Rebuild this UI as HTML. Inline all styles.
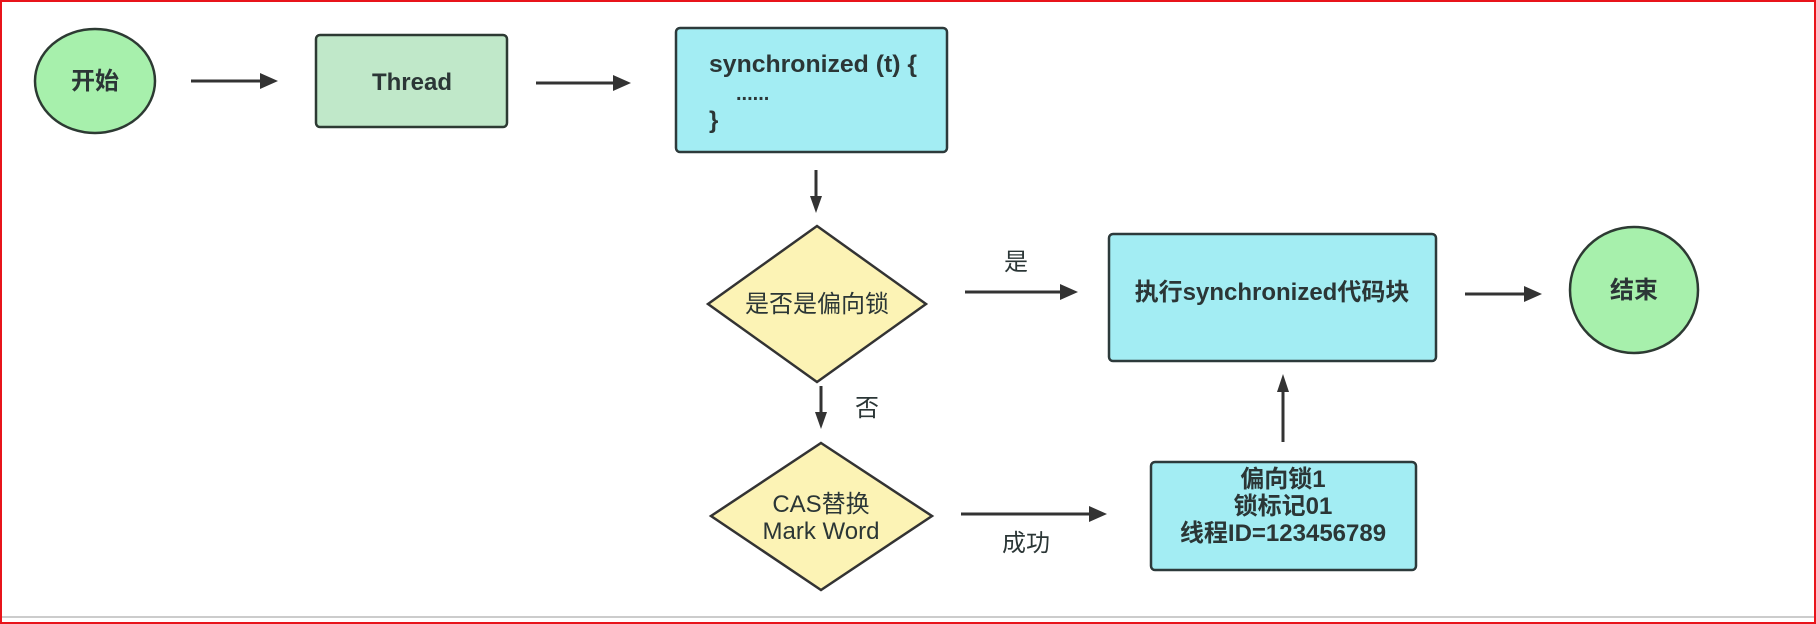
<!DOCTYPE html>
<html><head><meta charset="utf-8"><style>
html,body{margin:0;padding:0;background:#fff}
body{width:1816px;height:624px;overflow:hidden;position:relative}
svg{position:absolute;left:0;top:0}
text{font-family:"Liberation Sans","Noto Sans CJK SC",sans-serif;fill:#2b3636}
</style></head><body>
<svg width="1816" height="624" viewBox="0 0 1816 624">
<rect x="1" y="1" width="1814" height="622" fill="none" stroke="#e8141b" stroke-width="2"/>
<line x1="2" y1="617" x2="1814" y2="617" stroke="#9a9a9a" stroke-width="1"/>
<g stroke="#333" stroke-width="3" fill="none">
<line x1="191" y1="81" x2="262" y2="81"/>
<line x1="536" y1="83" x2="614" y2="83"/>
<line x1="816" y1="170" x2="816" y2="198"/>
<line x1="965" y1="292" x2="1061" y2="292"/>
<line x1="1465" y1="294" x2="1526" y2="294"/>
<line x1="821" y1="386" x2="821" y2="414"/>
<line x1="961" y1="514" x2="1090" y2="514"/>
<line x1="1283" y1="442" x2="1283" y2="390"/>
</g>
<g fill="#333">
<path d="M278,81 L260,73 L260,89Z"/>
<path d="M631,83 L613,75 L613,91Z"/>
<path d="M816,213 L810,196 L822,196Z"/>
<path d="M1078,292 L1060,284 L1060,300Z"/>
<path d="M1542,294 L1524,286 L1524,302Z"/>
<path d="M821,429 L815,412 L827,412Z"/>
<path d="M1107,514 L1089,506 L1089,522Z"/>
<path d="M1283,374 L1277,392 L1289,392Z"/>
</g>
<ellipse cx="95" cy="81" rx="60" ry="52" fill="#a7f0ac" stroke="#2d3a33" stroke-width="2.5"/>
<rect x="316" y="35" width="191" height="92" rx="4" fill="#c0e8c9" stroke="#2d3a33" stroke-width="2.5"/>
<rect x="676" y="28" width="271" height="124" rx="4" fill="#a3edf3" stroke="#2d3a3b" stroke-width="2.5"/>
<polygon points="817,226 926,304 817,382 708,304" fill="#fcf3b5" stroke="#333" stroke-width="2.5"/>
<rect x="1109" y="234" width="327" height="127" rx="4" fill="#a3edf3" stroke="#2d3a3b" stroke-width="2.5"/>
<ellipse cx="1634" cy="290" rx="64" ry="63" fill="#a7f0ac" stroke="#2d3a33" stroke-width="2.5"/>
<polygon points="821,443 932,516 821,590 711,516" fill="#fcf3b5" stroke="#333" stroke-width="2.5"/>
<rect x="1151" y="462" width="265" height="108" rx="4" fill="#a3edf3" stroke="#2d3a3b" stroke-width="2.5"/>
<g font-weight="bold" font-size="24">
<text x="95" y="89" text-anchor="middle">开始</text>
<text x="412" y="90" text-anchor="middle">Thread</text>
<text x="709" y="72" textLength="208" lengthAdjust="spacingAndGlyphs">synchronized (t) {</text>
<text x="736" y="100" font-size="20">......</text>
<text x="709" y="128">}</text>
<text x="1272" y="300" text-anchor="middle">执行synchronized代码块</text>
<text x="1634" y="298" text-anchor="middle">结束</text>
<text x="1283" y="487" text-anchor="middle">偏向锁1</text>
<text x="1283" y="514" text-anchor="middle">锁标记01</text>
<text x="1283" y="541" text-anchor="middle">线程ID=123456789</text>
</g>
<g font-size="24">
<text x="817" y="312" text-anchor="middle">是否是偏向锁</text>
<text x="821" y="512" text-anchor="middle">CAS替换</text>
<text x="821" y="539" text-anchor="middle">Mark Word</text>
<text x="1016" y="270" text-anchor="middle">是</text>
<text x="867" y="416" text-anchor="middle">否</text>
<text x="1026" y="551" text-anchor="middle">成功</text>
</g>
</svg>
</body></html>
